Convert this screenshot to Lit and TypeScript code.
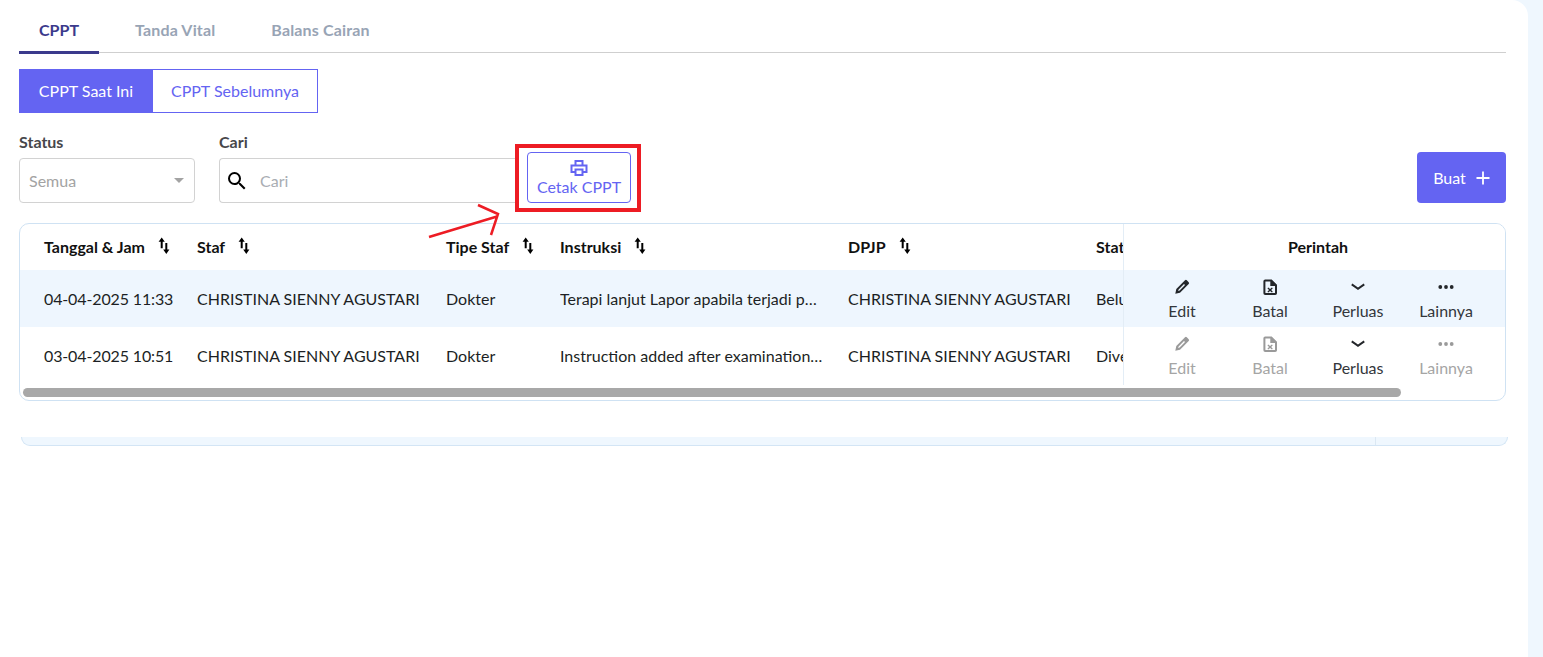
import { LitElement, html, css, svg } from 'lit';
import { customElement } from 'lit/decorators.js';

const sortIcon = html`<svg class="sort" width="12" height="18" viewBox="0 0 12 18">
  <path d="M3.7 0.4 0.6 4.8h2.1v6.4h2V4.800h2.100z" fill="#000"/>
  <path d="M8.300 17 5.200 12.600h2.100V6h2v6.600h2.100z" fill="#000"/>
</svg>`;

const paths = {
  edit: svg`<path d="M11 1.300a1.300 1.300 0 0 1 1.800 0l1.900 1.900a1.300 1.300 0 0 1 0 1.800l-8.700 8.700-4.700 1 1-4.700zM10 5 4.600 10.400l-.5 1.500 1.500-.5L11 6z" fill-rule="evenodd"/>`,
  batal: svg`<path d="M3.200.5h6.500L15 5.800v8.400a1.800 1.800 0 0 1-1.800 1.800H3.200a1.800 1.800 0 0 1-1.800-1.800V2.300A1.800 1.800 0 0 1 3.200.5zm.2 2v11.500h9.600V7H8.300V2.500z" fill-rule="evenodd"/><path d="m6.300 8.400 1.800 1.500 1.800-1.500.9.900-1.600 1.700 1.600 1.700-.9.900-1.800-1.500-1.800 1.500-.9-.9L7 11 5.400 9.300z"/>`,
  perluas: svg`<path d="M2.300 4.600 8 8.500l5.700-3.900 1.100 1.600L8 11 1.200 6.200z"/>`,
  lainnya: svg`<circle cx="2.300" cy="8" r="1.900"/><circle cx="8" cy="8" r="1.900"/><circle cx="13.700" cy="8" r="1.900"/>`,
};

const rows = [
  {
    date: '04-04-2025 11:33', staf: 'CHRISTINA SIENNY AGUSTARI', tipe: 'Dokter',
    instruksi: 'Terapi lanjut Lapor apabila terjadi perubahan kondisi pasien',
    dpjp: 'CHRISTINA SIENNY AGUSTARI', status: 'Belum Diverifikasi', active: true,
  },
  {
    date: '03-04-2025 10:51', staf: 'CHRISTINA SIENNY AGUSTARI', tipe: 'Dokter',
    instruksi: 'Instruction added after examination of the patient today',
    dpjp: 'CHRISTINA SIENNY AGUSTARI', status: 'Diverifikasi', active: false,
  },
];

@customElement('app-root')
export class AppRoot extends LitElement {
  static styles = css`
    :host {
      display: block;
      height: 657px;
      overflow: hidden;
      position: relative;
      background: #eff7fe;
      font-family: Lato, "Open Sans", sans-serif;
      font-size: 16px;
      color: #1f2329;
    }
    .card {
      width: 1528px;
      height: 657px;
      box-sizing: border-box;
      padding: 0 22px 0 19px;
      background: #fff;
      border-top-right-radius: 16px;
    }
    .tabs {
      display: flex;
      gap: 16px;
      height: 53px;
      box-sizing: border-box;
      border-bottom: 1px solid #cfcfcf;
      margin-bottom: 16px;
    }
    .tab {
      padding: 21px 20px 0;
      height: 54px;
      box-sizing: border-box;
      font-weight: 700;
      line-height: 18px;
      letter-spacing: 0.15px;
      color: #98a4b5;
    }
    .tab.on {
      width: 80px;
      color: #3b3a8c;
      letter-spacing: 0;
      border-bottom: 3px solid #3b3a8c;
    }
    .toggle { display: flex; height: 44px; width: 299px; }
    .toggle div {
      display: flex;
      align-items: center;
      justify-content: center;
      box-sizing: border-box;
      padding-bottom: 2px;
      border: 1px solid #6464f2;
      color: #6464f2;
    }
    .toggle .filled { width: 134px; background: #6464f2; color: #fff; }
    .toggle .plain { flex: 1; border-left: 0; }
    .filters {
      display: flex;
      align-items: flex-end;
      margin-top: 20px;
    }
    .field label {
      display: block;
      font-weight: 700;
      line-height: 18px;
      color: #47474a;
      margin-bottom: 7px;
    }
    .box {
      display: flex;
      align-items: center;
      height: 45px;
      box-sizing: border-box;
      border: 1px solid #d2d2d2;
      border-radius: 4px;
      color: #a3a3a3;
    }
    .select { width: 176px; margin-right: 24px; padding: 0 10px 0 9px; justify-content: space-between; }
    .caret {
      width: 0;
      height: 0;
      border: 5px solid transparent;
      border-top: 5px solid #a3a3a3;
      border-bottom: 0;
    }
    .search { width: 299px; padding-left: 5px; border-radius: 4px 0 0 4px; border-right: 0; color: #a9adb3; }
    .search svg { margin-right: 11px; }
    .print {
      width: 104px;
      height: 51px;
      margin-left: 9px;
      box-sizing: border-box;
      border: 1px solid #6464f2;
      border-radius: 4px;
      color: #6464f2;
      display: flex;
      flex-direction: column;
      align-items: center;
      padding-top: 6px;
      line-height: 18px;
    }
    .print svg { margin-bottom: 1px; }
    .buat {
      margin-left: auto;
      width: 89px;
      height: 51px;
      display: flex;
      align-items: center;
      justify-content: center;
      gap: 10px;
      border-radius: 4px;
      background: #6464f2;
      color: #fff;
    }
    .table {
      margin-top: 20px;
      height: 178px;
      box-sizing: border-box;
      border: 1px solid #cfe2f3;
      border-radius: 10px;
      overflow: hidden;
      display: flex;
      flex-direction: column;
    }
    .panes { display: flex; height: 161px; }
    .scroll { width: 1103px; overflow: hidden; flex: none; }
    .line {
      display: grid;
      grid-template-columns: 153px 249px 114px 288px 248px 300px;
      width: 1400px;
      padding-left: 24px;
      align-items: center;
    }
    .head { height: 46px; box-sizing: border-box; padding-bottom: 2px; font-weight: 700; color: #111; }
    .body { height: 57px; color: #1c1f24; }
    .body.active, .acts.active { background: #eef6fe; }
    .head .th { display: flex; align-items: center; }
    .sort { margin-left: 13px; margin-top: -1px; }
    .date { letter-spacing: -0.13px; }
    .clip {
      width: 263px;
      white-space: nowrap;
      overflow: hidden;
      text-overflow: ellipsis;
    }
    .nowrap { white-space: nowrap; }
    .fixed { flex: 1; border-left: 1px solid #e3edf6; background: #fff; }
    .fixed .title {
      height: 46px;
      box-sizing: border-box;
      display: flex;
      align-items: center;
      justify-content: center;
      padding: 0 0 2px 7px;
      font-weight: 700;
      color: #111;
    }
    .acts {
      height: 57px;
      box-sizing: border-box;
      display: grid;
      grid-template-columns: repeat(4, 88px);
      padding-left: 14px;
    }
    .act {
      display: flex;
      flex-direction: column;
      align-items: center;
      padding-top: 9px;
      line-height: 18px;
      color: #33363b;
      fill: #24272b;
    }
    .act svg { margin-bottom: 7px; }
    .act.off { color: #a5a5a5; fill: #9a9a9a; }
    .bar { padding: 3px 0 0 3px; }
    .thumb { width: 1378px; height: 9px; border-radius: 5px; background: #a8a8a8; }
    .behind {
      margin: 36px -2px 0 2px;
      height: 9px;
      box-sizing: border-box;
      background: #eff7fe;
      border: 1px solid #d3e5f5;
      border-top: 0;
      border-radius: 0 0 10px 10px;
      display: flex;
      justify-content: flex-end;
    }
    .behind div { width: 131px; border-left: 1px solid #dbe8f3; }
    .mark {
      position: absolute;
      left: 515px;
      top: 144px;
      width: 126px;
      height: 68px;
      box-sizing: border-box;
      border: 4px solid #ed1c24;
    }
    .arrow { position: absolute; left: 425px; top: 200px; }
  `;

  private action(name: keyof typeof paths, label: string, off: boolean) {
    return html`<div class="act ${off ? 'off' : ''}">
      <svg width="16" height="16" viewBox="0 0 16 16">${paths[name]}</svg>
      <span>${label}</span>
    </div>`;
  }

  render() {
    return html`
      <div class="card">
        <div class="tabs">
          <div class="tab on">CPPT</div>
          <div class="tab">Tanda Vital</div>
          <div class="tab">Balans Cairan</div>
        </div>

        <div class="toggle">
          <div class="filled">CPPT Saat Ini</div>
          <div class="plain">CPPT Sebelumnya</div>
        </div>

        <div class="filters">
          <div class="field">
            <label>Status</label>
            <div class="box select"><span>Semua</span><i class="caret"></i></div>
          </div>
          <div class="field">
            <label>Cari</label>
            <div class="box search">
              <svg width="24" height="24" viewBox="0 0 24 24"><path fill="#000" d="M15.5 14h-.79l-.28-.27A6.471 6.471 0 0 0 16 9.500 6.500 6.500 0 1 0 9.500 16c1.610 0 3.090-.59 4.230-1.570l.27.28v.79l5 4.990L20.490 19l-4.990-5zm-6 0C7.010 14 5 11.990 5 9.500S7.010 5 9.500 5 14 7.010 14 9.500 11.990 14 9.500 14z"/></svg>
              <span>Cari</span>
            </div>
          </div>
          <div class="print">
            <svg width="18" height="18" viewBox="0 0 18 18" fill="none" stroke="#6464f2" stroke-width="2">
              <path d="M5.500 6V2h7v4M5 13H1.500V6.500h15V13H13"/><path d="M5.500 10.500h7v5.500h-7z"/>
            </svg>
            <span>Cetak CPPT</span>
          </div>
          <div class="buat">
            <span>Buat</span>
            <svg width="14" height="14" viewBox="0 0 14 14"><path d="M6.100 0.500h1.800v5.600h5.600v1.800H7.900v5.600H6.100V7.900H0.500V6.100h5.600z" fill="#fff"/></svg>
          </div>
        </div>

        <div class="table">
          <div class="panes">
            <div class="scroll">
              <div class="line head">
                <div class="th">Tanggal &amp; Jam${sortIcon}</div>
                <div class="th">Staf${sortIcon}</div>
                <div class="th">Tipe Staf${sortIcon}</div>
                <div class="th">Instruksi${sortIcon}</div>
                <div class="th">DPJP${sortIcon}</div>
                <div class="th">Status${sortIcon}</div>
              </div>
              ${rows.map(r => html`
                <div class="line body ${r.active ? 'active' : ''}">
                  <div class="date">${r.date}</div>
                  <div class="nowrap">${r.staf}</div>
                  <div>${r.tipe}</div>
                  <div class="clip">${r.instruksi}</div>
                  <div class="nowrap">${r.dpjp}</div>
                  <div class="nowrap">${r.status}</div>
                </div>`)}
            </div>
            <div class="fixed">
              <div class="title">Perintah</div>
              ${rows.map(r => html`
                <div class="acts ${r.active ? 'active' : ''}">
                  ${this.action('edit', 'Edit', !r.active)}
                  ${this.action('batal', 'Batal', !r.active)}
                  ${this.action('perluas', 'Perluas', false)}
                  ${this.action('lainnya', 'Lainnya', !r.active)}
                </div>`)}
            </div>
          </div>
          <div class="bar"><div class="thumb"></div></div>
        </div>

        <div class="behind"><div></div></div>
      </div>

      <div class="mark"></div>
      <svg class="arrow" width="80" height="40" viewBox="0 0 80 40" fill="none" stroke="#ed1c24" stroke-width="2.500">
        <path d="M4 37 72 16.500M53 5l20 9-7 21"/>
      </svg>
    `;
  }
}
